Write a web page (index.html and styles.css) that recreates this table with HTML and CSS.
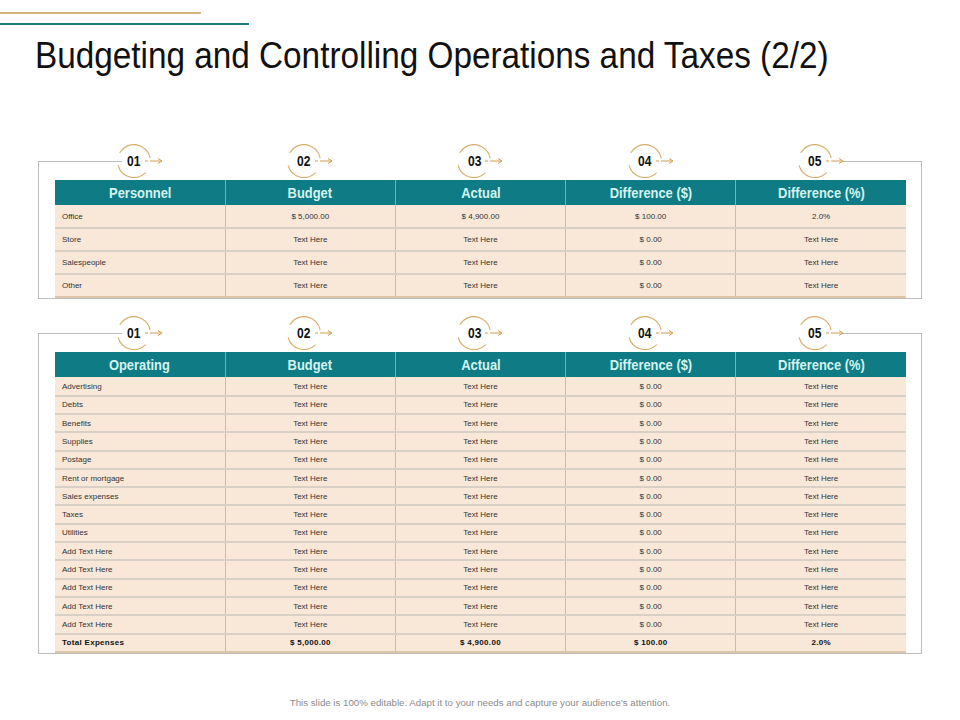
FILE: index.html
```html
<!DOCTYPE html>
<html>
<head>
<meta charset="utf-8">
<link rel="stylesheet" href="styles.css">
</head>
<body>
<div class="page">
  <div class="deco">
    <div class="deco-gold"></div>
    <div class="deco-teal"></div>
  </div>
  <h1 class="title"><span class="title-text">Budgeting and Controlling Operations and Taxes (2/2)</span></h1>

  <section class="frame frame-one">
    <div class="badges">
      <div class="badge-cell"><div class="badge"><svg class="ring" width="48" height="34" viewBox="0 0 48 34"><path d="M3.7 8.75 A16.5 16.5 0 0 1 34.2 14.1" /><path d="M29.7 28.7 A16.5 16.5 0 0 1 2.1 21.3" /><path class="arrow" d="M29 17 H32 M34 17 H45" /><path class="arrow" d="M42 14.5 L46 17 L42 19.5" /></svg><span class="num"><span class="squeeze">01</span></span></div></div>
      <div class="badge-cell"><div class="badge"><svg class="ring" width="48" height="34" viewBox="0 0 48 34"><path d="M3.7 8.75 A16.5 16.5 0 0 1 34.2 14.1" /><path d="M29.7 28.7 A16.5 16.5 0 0 1 2.1 21.3" /><path class="arrow" d="M29 17 H32 M34 17 H45" /><path class="arrow" d="M42 14.5 L46 17 L42 19.5" /></svg><span class="num"><span class="squeeze">02</span></span></div></div>
      <div class="badge-cell"><div class="badge"><svg class="ring" width="48" height="34" viewBox="0 0 48 34"><path d="M3.7 8.75 A16.5 16.5 0 0 1 34.2 14.1" /><path d="M29.7 28.7 A16.5 16.5 0 0 1 2.1 21.3" /><path class="arrow" d="M29 17 H32 M34 17 H45" /><path class="arrow" d="M42 14.5 L46 17 L42 19.5" /></svg><span class="num"><span class="squeeze">03</span></span></div></div>
      <div class="badge-cell"><div class="badge"><svg class="ring" width="48" height="34" viewBox="0 0 48 34"><path d="M3.7 8.75 A16.5 16.5 0 0 1 34.2 14.1" /><path d="M29.7 28.7 A16.5 16.5 0 0 1 2.1 21.3" /><path class="arrow" d="M29 17 H32 M34 17 H45" /><path class="arrow" d="M42 14.5 L46 17 L42 19.5" /></svg><span class="num"><span class="squeeze">04</span></span></div></div>
      <div class="badge-cell"><div class="badge"><svg class="ring" width="48" height="34" viewBox="0 0 48 34"><path d="M3.7 8.75 A16.5 16.5 0 0 1 34.2 14.1" /><path d="M29.7 28.7 A16.5 16.5 0 0 1 2.1 21.3" /><path class="arrow" d="M29 17 H32 M34 17 H45" /><path class="arrow" d="M42 14.5 L46 17 L42 19.5" /></svg><span class="num"><span class="squeeze">05</span></span></div></div>
    </div>
    <table class="grid grid-one">
      <thead>
        <tr><th><span class="squeeze">Personnel</span></th><th><span class="squeeze">Budget</span></th><th><span class="squeeze">Actual</span></th><th><span class="squeeze">Difference ($)</span></th><th><span class="squeeze">Difference (%)</span></th></tr>
      </thead>
      <tbody>
        <tr><td>Office</td><td>$ 5,000.00</td><td>$ 4,900.00</td><td>$ 100.00</td><td>2.0%</td></tr>
        <tr><td>Store</td><td>Text Here</td><td>Text Here</td><td>$ 0.00</td><td>Text Here</td></tr>
        <tr><td>Salespeople</td><td>Text Here</td><td>Text Here</td><td>$ 0.00</td><td>Text Here</td></tr>
        <tr><td>Other</td><td>Text Here</td><td>Text Here</td><td>$ 0.00</td><td>Text Here</td></tr>
      </tbody>
    </table>
  </section>

  <section class="frame frame-two">
    <div class="badges">
      <div class="badge-cell"><div class="badge"><svg class="ring" width="48" height="34" viewBox="0 0 48 34"><path d="M3.7 8.75 A16.5 16.5 0 0 1 34.2 14.1" /><path d="M29.7 28.7 A16.5 16.5 0 0 1 2.1 21.3" /><path class="arrow" d="M29 17 H32 M34 17 H45" /><path class="arrow" d="M42 14.5 L46 17 L42 19.5" /></svg><span class="num"><span class="squeeze">01</span></span></div></div>
      <div class="badge-cell"><div class="badge"><svg class="ring" width="48" height="34" viewBox="0 0 48 34"><path d="M3.7 8.75 A16.5 16.5 0 0 1 34.2 14.1" /><path d="M29.7 28.7 A16.5 16.5 0 0 1 2.1 21.3" /><path class="arrow" d="M29 17 H32 M34 17 H45" /><path class="arrow" d="M42 14.5 L46 17 L42 19.5" /></svg><span class="num"><span class="squeeze">02</span></span></div></div>
      <div class="badge-cell"><div class="badge"><svg class="ring" width="48" height="34" viewBox="0 0 48 34"><path d="M3.7 8.75 A16.5 16.5 0 0 1 34.2 14.1" /><path d="M29.7 28.7 A16.5 16.5 0 0 1 2.1 21.3" /><path class="arrow" d="M29 17 H32 M34 17 H45" /><path class="arrow" d="M42 14.5 L46 17 L42 19.5" /></svg><span class="num"><span class="squeeze">03</span></span></div></div>
      <div class="badge-cell"><div class="badge"><svg class="ring" width="48" height="34" viewBox="0 0 48 34"><path d="M3.7 8.75 A16.5 16.5 0 0 1 34.2 14.1" /><path d="M29.7 28.7 A16.5 16.5 0 0 1 2.1 21.3" /><path class="arrow" d="M29 17 H32 M34 17 H45" /><path class="arrow" d="M42 14.5 L46 17 L42 19.5" /></svg><span class="num"><span class="squeeze">04</span></span></div></div>
      <div class="badge-cell"><div class="badge"><svg class="ring" width="48" height="34" viewBox="0 0 48 34"><path d="M3.7 8.75 A16.5 16.5 0 0 1 34.2 14.1" /><path d="M29.7 28.7 A16.5 16.5 0 0 1 2.1 21.3" /><path class="arrow" d="M29 17 H32 M34 17 H45" /><path class="arrow" d="M42 14.5 L46 17 L42 19.5" /></svg><span class="num"><span class="squeeze">05</span></span></div></div>
    </div>
    <table class="grid grid-two">
      <thead>
        <tr><th><span class="squeeze">Operating</span></th><th><span class="squeeze">Budget</span></th><th><span class="squeeze">Actual</span></th><th><span class="squeeze">Difference ($)</span></th><th><span class="squeeze">Difference (%)</span></th></tr>
      </thead>
      <tbody>
        <tr><td>Advertising</td><td>Text Here</td><td>Text Here</td><td>$ 0.00</td><td>Text Here</td></tr>
        <tr><td>Debts</td><td>Text Here</td><td>Text Here</td><td>$ 0.00</td><td>Text Here</td></tr>
        <tr><td>Benefits</td><td>Text Here</td><td>Text Here</td><td>$ 0.00</td><td>Text Here</td></tr>
        <tr><td>Supplies</td><td>Text Here</td><td>Text Here</td><td>$ 0.00</td><td>Text Here</td></tr>
        <tr><td>Postage</td><td>Text Here</td><td>Text Here</td><td>$ 0.00</td><td>Text Here</td></tr>
        <tr><td>Rent or mortgage</td><td>Text Here</td><td>Text Here</td><td>$ 0.00</td><td>Text Here</td></tr>
        <tr><td>Sales expenses</td><td>Text Here</td><td>Text Here</td><td>$ 0.00</td><td>Text Here</td></tr>
        <tr><td>Taxes</td><td>Text Here</td><td>Text Here</td><td>$ 0.00</td><td>Text Here</td></tr>
        <tr><td>Utilities</td><td>Text Here</td><td>Text Here</td><td>$ 0.00</td><td>Text Here</td></tr>
        <tr><td>Add Text Here</td><td>Text Here</td><td>Text Here</td><td>$ 0.00</td><td>Text Here</td></tr>
        <tr><td>Add Text Here</td><td>Text Here</td><td>Text Here</td><td>$ 0.00</td><td>Text Here</td></tr>
        <tr><td>Add Text Here</td><td>Text Here</td><td>Text Here</td><td>$ 0.00</td><td>Text Here</td></tr>
        <tr><td>Add Text Here</td><td>Text Here</td><td>Text Here</td><td>$ 0.00</td><td>Text Here</td></tr>
        <tr><td>Add Text Here</td><td>Text Here</td><td>Text Here</td><td>$ 0.00</td><td>Text Here</td></tr>
        <tr class="total"><td>Total Expenses</td><td>$ 5,000.00</td><td>$ 4,900.00</td><td>$ 100.00</td><td>2.0%</td></tr>
      </tbody>
    </table>
  </section>

  <p class="footer">This slide is 100% editable. Adapt it to your needs and capture your audience's attention.</p>
</div>
</body>
</html>
```

FILE: styles.css
```css
* { box-sizing: border-box; }

html, body {
  margin: 0;
  padding: 0;
  background: #ffffff;
}

.page {
  width: 960px;
  height: 720px;
  padding-top: 12px;
  font-family: "Liberation Sans", Arial, sans-serif;
  color: #222;
}

.deco {
  display: flex;
  flex-direction: column;
  gap: 9px;
}

.deco-gold {
  width: 201px;
  height: 2px;
  background: #d6b477;
}

.deco-teal {
  width: 249px;
  height: 2px;
  background: #1b7a80;
}

.title {
  margin: 11px 0 0 35px;
  font-family: "Liberation Sans", Arial, sans-serif;
  font-weight: normal;
  font-size: 37px;
  line-height: 40px;
  color: #111;
  white-space: nowrap;
}

.title-text {
  display: inline-block;
  transform: scaleX(0.9);
  transform-origin: 0 50%;
}

.squeeze {
  display: inline-block;
  transform: scaleX(0.86);
  transform-origin: 50% 50%;
  white-space: nowrap;
}

.frame {
  width: 884px;
  margin-left: 38px;
  border: 1px solid #bdbdbd;
}

.frame-one {
  margin-top: 85px;
}

.frame-two {
  margin-top: 34px;
}

.badges {
  position: relative;
  margin: -18px 15px 0 16px;
  height: 36px;
  display: grid;
  grid-template-columns: repeat(5, 1fr);
}

.badges::before {
  content: "";
  position: absolute;
  left: 67px;
  right: -1px;
  top: 17px;
  height: 3px;
  background: #ffffff;
}

.frame .badges::after {
  content: "";
  position: absolute;
  right: -16px;
  width: 80px;
  top: 17px;
  height: 1px;
  background: #bdbdbd;
}

.badge-cell {
  display: flex;
  justify-content: center;
  position: relative;
  z-index: 1;
}

.badge {
  position: relative;
  width: 48px;
  height: 34px;
}

.ring {
  display: block;
}

.ring path {
  fill: none;
  stroke: #d9ae6b;
  stroke-width: 1.2;
}

.ring .arrow {
  stroke: #d59a4e;
  stroke-width: 1;
}

.num {
  position: absolute;
  left: 1px;
  top: 0;
  width: 34px;
  height: 34px;
  display: flex;
  align-items: center;
  justify-content: center;
  font-family: "Liberation Sans", Arial, sans-serif;
  font-weight: bold;
  font-size: 14px;
  color: #111;
}

.grid {
  width: 851px;
  margin: 0 15px 0 16px;
  border-collapse: collapse;
  table-layout: fixed;
  background: #f9e8d8;
}

.grid th {
  background: #0f7b84;
  color: #d4f3f0;
  font-family: "Liberation Sans", Arial, sans-serif;
  font-weight: bold;
  font-size: 15px;
  height: 25px;
  padding: 0;
  text-align: center;
  border-left: 1px solid #6fb3b6;
}

.grid th:first-child {
  border-left: none;
}

.grid td {
  font-size: 8px;
  color: #333;
  text-align: center;
  padding: 0;
  border-left: 1px solid #c4bbb1;
  border-bottom: 2px solid #d8cfc5;
}

.grid td:first-child {
  text-align: left;
  padding-left: 7px;
  border-left: none;
}

.grid tbody tr:last-child td {
  border-bottom: 2px solid #dcc5a8;
}

.grid-one td {
  height: 23.1px;
}

.grid-two td {
  height: 18.3px;
}

.grid .total td {
  font-weight: bold;
  color: #111;
  letter-spacing: 0.3px;
}

.footer {
  margin: 43px 0 0 0;
  text-align: center;
  font-size: 9.7px;
  color: #8b8b8b;
}
```
